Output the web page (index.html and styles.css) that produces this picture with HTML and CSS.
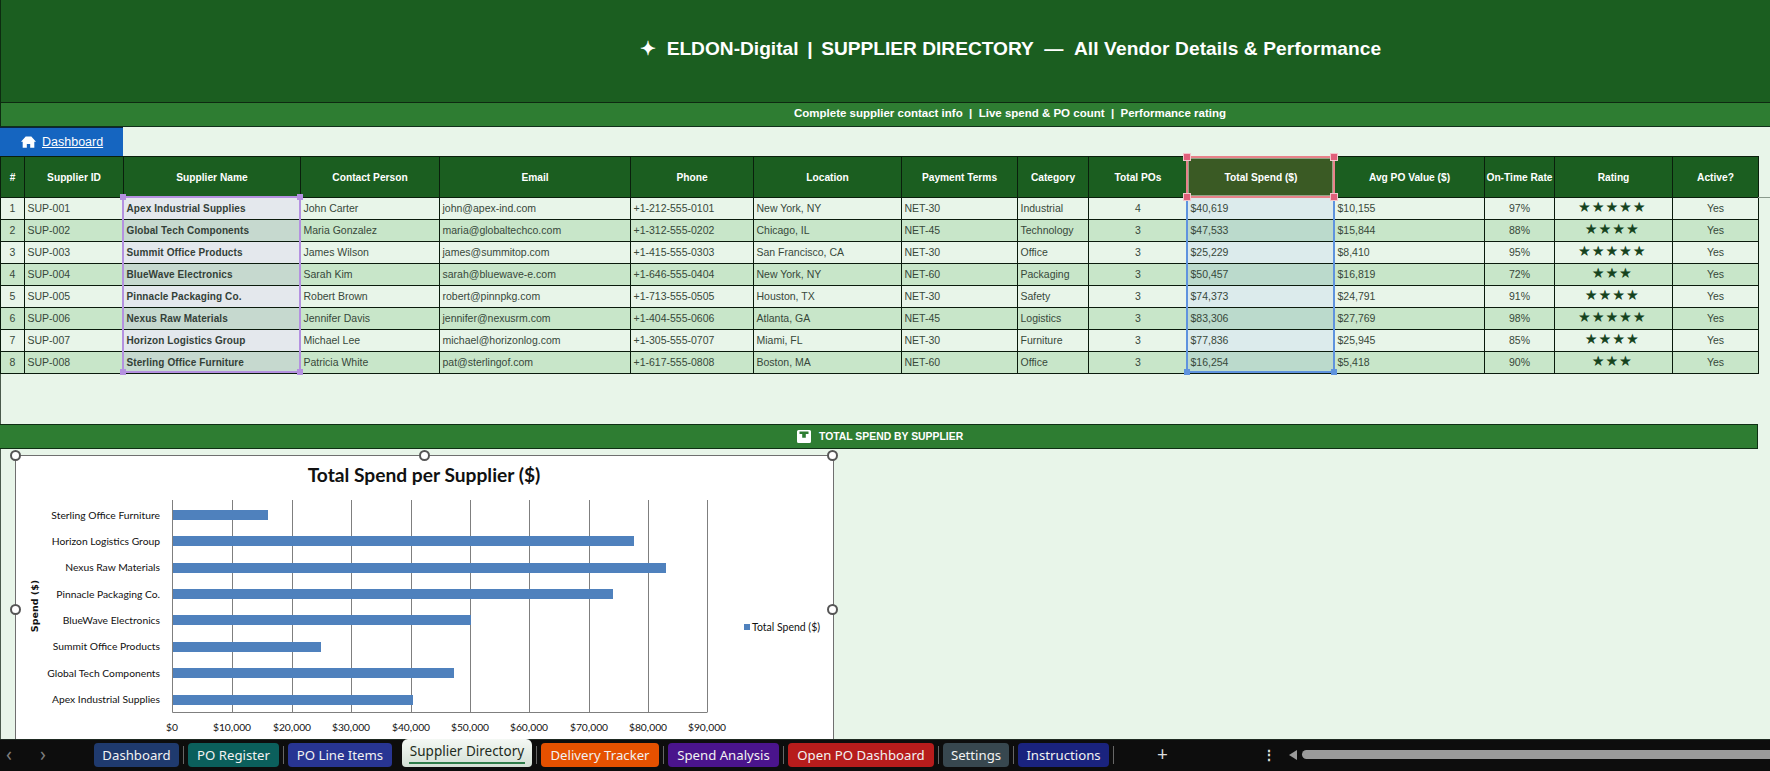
FILE: index.html
```html
<!DOCTYPE html>
<html lang="en">
<head>
<meta charset="utf-8">
<title>Supplier Directory</title>
<link rel="stylesheet" href="styles.css">
</head>
<body>
<div class="window">
  <main class="sheet">
    <header class="title-band"><h1>✦&nbsp; ELDON-Digital <span class="pipe">&nbsp;|&nbsp;</span> SUPPLIER DIRECTORY &nbsp;—&nbsp; <span class="tail">All Vendor Details &amp; Performance</span></h1></header>
    <div class="sub-band">Complete supplier contact info &nbsp;|&nbsp; Live spend &amp; PO count &nbsp;|&nbsp; Performance rating</div>
    <div class="nav-row">
      <a class="dash-link" href="#">
        <svg class="home-icon" viewBox="0 0 16 12" aria-hidden="true"><path d="M5 0h6l5 5.6h-1.8V12H9.8V8.2H6.2V12H1.8V5.6H0z" fill="#fff"/></svg>
        <span>Dashboard</span>
      </a>
    </div>
    <div class="table-wrap">
      <table class="grid">
        <colgroup>
          <col class="c1"><col class="c2"><col class="c3"><col class="c4"><col class="c5"><col class="c6"><col class="c7"><col class="c8"><col class="c9"><col class="c10"><col class="c11"><col class="c12"><col class="c13"><col class="c14"><col class="c15">
        </colgroup>
        <thead>
          <tr><th>#</th><th>Supplier ID</th><th>Supplier Name</th><th>Contact Person</th><th>Email</th><th>Phone</th><th>Location</th><th>Payment Terms</th><th>Category</th><th>Total POs</th><th class="spend-head">Total Spend ($)</th><th>Avg PO Value ($)</th><th>On-Time Rate</th><th>Rating</th><th>Active?</th></tr>
        </thead>
        <tbody>
          <tr><td class="ctr">1</td><td>SUP-001</td><td class="name">Apex Industrial Supplies</td><td>John Carter</td><td>john@apex-ind.com</td><td>+1-212-555-0101</td><td>New York, NY</td><td>NET-30</td><td>Industrial</td><td class="ctr">4</td><td class="spend">$40,619</td><td>$10,155</td><td class="ctr">97%</td><td class="ctr stars">★★★★★</td><td class="ctr">Yes</td></tr>
          <tr><td class="ctr">2</td><td>SUP-002</td><td class="name">Global Tech Components</td><td>Maria Gonzalez</td><td>maria@globaltechco.com</td><td>+1-312-555-0202</td><td>Chicago, IL</td><td>NET-45</td><td>Technology</td><td class="ctr">3</td><td class="spend">$47,533</td><td>$15,844</td><td class="ctr">88%</td><td class="ctr stars">★★★★</td><td class="ctr">Yes</td></tr>
          <tr><td class="ctr">3</td><td>SUP-003</td><td class="name">Summit Office Products</td><td>James Wilson</td><td>james@summitop.com</td><td>+1-415-555-0303</td><td>San Francisco, CA</td><td>NET-30</td><td>Office</td><td class="ctr">3</td><td class="spend">$25,229</td><td>$8,410</td><td class="ctr">95%</td><td class="ctr stars">★★★★★</td><td class="ctr">Yes</td></tr>
          <tr><td class="ctr">4</td><td>SUP-004</td><td class="name">BlueWave Electronics</td><td>Sarah Kim</td><td>sarah@bluewave-e.com</td><td>+1-646-555-0404</td><td>New York, NY</td><td>NET-60</td><td>Packaging</td><td class="ctr">3</td><td class="spend">$50,457</td><td>$16,819</td><td class="ctr">72%</td><td class="ctr stars">★★★</td><td class="ctr">Yes</td></tr>
          <tr><td class="ctr">5</td><td>SUP-005</td><td class="name">Pinnacle Packaging Co.</td><td>Robert Brown</td><td>robert@pinnpkg.com</td><td>+1-713-555-0505</td><td>Houston, TX</td><td>NET-30</td><td>Safety</td><td class="ctr">3</td><td class="spend">$74,373</td><td>$24,791</td><td class="ctr">91%</td><td class="ctr stars">★★★★</td><td class="ctr">Yes</td></tr>
          <tr><td class="ctr">6</td><td>SUP-006</td><td class="name">Nexus Raw Materials</td><td>Jennifer Davis</td><td>jennifer@nexusrm.com</td><td>+1-404-555-0606</td><td>Atlanta, GA</td><td>NET-45</td><td>Logistics</td><td class="ctr">3</td><td class="spend">$83,306</td><td>$27,769</td><td class="ctr">98%</td><td class="ctr stars">★★★★★</td><td class="ctr">Yes</td></tr>
          <tr><td class="ctr">7</td><td>SUP-007</td><td class="name">Horizon Logistics Group</td><td>Michael Lee</td><td>michael@horizonlog.com</td><td>+1-305-555-0707</td><td>Miami, FL</td><td>NET-30</td><td>Furniture</td><td class="ctr">3</td><td class="spend">$77,836</td><td>$25,945</td><td class="ctr">85%</td><td class="ctr stars">★★★★</td><td class="ctr">Yes</td></tr>
          <tr><td class="ctr">8</td><td>SUP-008</td><td class="name">Sterling Office Furniture</td><td>Patricia White</td><td>pat@sterlingof.com</td><td>+1-617-555-0808</td><td>Boston, MA</td><td>NET-60</td><td>Office</td><td class="ctr">3</td><td class="spend">$16,254</td><td>$5,418</td><td class="ctr">90%</td><td class="ctr stars">★★★</td><td class="ctr">Yes</td></tr>
        </tbody>
      </table>
      <div class="range range-name"><i class="h tl"></i><i class="h tr"></i><i class="h bl"></i><i class="h br"></i></div>
      <div class="range range-spend"><i class="h bl"></i><i class="h br"></i></div>
      <div class="range range-head"><i class="h tl"></i><i class="h tr"></i><i class="h bl"></i><i class="h br"></i></div>
      <div class="row-stub"></div>
    </div>
    <div class="section-bar">
      <svg class="sec-icon" viewBox="0 0 14 13" aria-hidden="true"><path d="M1.500 0h11A1.500 1.500 0 0 1 14 1.500v10a1.500 1.500 0 0 1-1.500 1.500h-11A1.500 1.500 0 0 1 0 11.500v-10A1.500 1.500 0 0 1 1.500 0z" fill="#fff"/><path d="M2.500 1.500h9v2.500H8.800v3.800H5.200V4H2.500z" fill="#2e7d32"/></svg>
      <span>TOTAL SPEND BY SUPPLIER</span>
    </div>
    <figure class="chart">
      <svg class="chart-svg" viewBox="1 1 817 284" width="817" height="284">
        <text x="409" y="27" class="ct">Total Spend per Supplier ($)</text>
        <g class="gl">
          <path d="M157.500 45v212M217.500 45v212M277.500 45v212M336.500 45v212M396.500 45v212M455.500 45v212M514.500 45v212M574.500 45v212M633.500 45v212M692.500 45v212"/>
        </g>
        <path class="axis" d="M157.500 45v212.500H692.500"/>
        <g class="bars">
          <rect x="158" y="55" width="95" height="10"/>
          <rect x="158" y="81" width="461" height="10"/>
          <rect x="158" y="108" width="493" height="10"/>
          <rect x="158" y="134" width="440" height="10"/>
          <rect x="158" y="160" width="298" height="10"/>
          <rect x="158" y="187" width="148" height="10"/>
          <rect x="158" y="213" width="281" height="10"/>
          <rect x="158" y="240" width="240" height="10"/>
        </g>
        <g class="yl">
          <text x="145" y="64">Sterling Office Furniture</text>
          <text x="145" y="90">Horizon Logistics Group</text>
          <text x="145" y="116">Nexus Raw Materials</text>
          <text x="145" y="143">Pinnacle Packaging Co.</text>
          <text x="145" y="169">BlueWave Electronics</text>
          <text x="145" y="195">Summit Office Products</text>
          <text x="145" y="222">Global Tech Components</text>
          <text x="145" y="248">Apex Industrial Supplies</text>
        </g>
        <g class="xl">
          <text x="157" y="276">$0</text><text x="217" y="276">$10,000</text><text x="277" y="276">$20,000</text><text x="336" y="276">$30,000</text><text x="396" y="276">$40,000</text><text x="455" y="276">$50,000</text><text x="514" y="276">$60,000</text><text x="574" y="276">$70,000</text><text x="633" y="276">$80,000</text><text x="692" y="276">$90,000</text>
        </g>
        <text class="yt" transform="translate(23 151) rotate(-90)">Spend ($)</text>
        <rect class="lg" x="729" y="169" width="6" height="6"/>
        <text class="lt" x="737" y="176">Total Spend ($)</text>
      </svg>
      <i class="cd ctl"></i><i class="cd ctc"></i><i class="cd ctr-h"></i><i class="cd cml"></i><i class="cd cmr"></i>
    </figure>
  </main>
  <footer class="tabbar">
    <div class="tab-nav"><span>‹</span><span>›</span></div>
    <div class="tabs">
      <a class="tab t-dash">Dashboard</a><i class="sep"></i>
      <a class="tab t-reg">PO Register</a><i class="sep"></i>
      <a class="tab t-line">PO Line Items</a>
      <a class="tab active">Supplier Directory</a><i class="sep"></i>
      <a class="tab t-del">Delivery Tracker</a><i class="sep"></i>
      <a class="tab t-spend">Spend Analysis</a><i class="sep"></i>
      <a class="tab t-open">Open PO Dashboard</a><i class="sep"></i>
      <a class="tab t-set">Settings</a><i class="sep"></i>
      <a class="tab t-ins">Instructions</a><i class="sep"></i>
    </div>
    <span class="plus">+</span>
    <span class="kebab">⋮</span>
    <div class="scroll"><i class="arrow"></i><div class="thumb"></div></div>
  </footer>
</div>
</body>
</html>
```

FILE: styles.css
```css
* { box-sizing: border-box; }
html, body { margin: 0; height: 100%; overflow: hidden; }
body { font-family: "Liberation Sans", Arial, sans-serif; background: #e8f5e9; }
.window { width: 1770px; height: 771px; display: flex; flex-direction: column; }
.sheet { flex: 1; min-height: 0; overflow: hidden; background: linear-gradient(#4a5a4c, #4a5a4c) left top / 1px 100% no-repeat, #e8f5e9; }

.title-band { height: 103px; background: #1b5e20; border-left: 1px solid #0d2c10; border-bottom: 1px solid #0e2a11; padding: 37px 0 0 639px; }
.title-band h1 { margin: 0; color: #fff; font-size: 19.15px; line-height: 24px; font-weight: 700; white-space: nowrap; }
.pipe { margin: 0 -2px; }
.tail { letter-spacing: .1px; }
.sub-band { height: 24px; background: #2e7d32; border-left: 1px solid #0d2c10; border-bottom: 1px solid #10301a; color: #fff; font-size: 11.5px; font-weight: 700; line-height: 21px; padding-left: 793px; white-space: nowrap; }
.nav-row { height: 29px; }
.dash-link { display: flex; align-items: center; gap: 6px; width: 123px; height: 29px; background: #1565c0; color: #fff; font-size: 12.5px; padding: 0 0 1px 21px; text-decoration: underline; border-top: 1px solid #0b2340; }
.home-icon { width: 15px; height: 12px; }

.table-wrap { position: relative; height: 268px; }
.grid { border-collapse: collapse; table-layout: fixed; width: 1758px; }
.c1 { width: 24px; } .c2 { width: 99px; } .c3 { width: 177px; } .c4 { width: 139px; } .c5 { width: 191px; }
.c6 { width: 123px; } .c7 { width: 148px; } .c8 { width: 116px; } .c9 { width: 71px; } .c10 { width: 99px; }
.c11 { width: 147px; } .c12 { width: 150px; } .c13 { width: 70px; } .c14 { width: 118px; } .c15 { width: 86px; }
.grid th { height: 41px; background: #1b5e20; color: #fff; font-size: 10.2px; font-weight: 700; border: 1px solid #0a1f0c; padding: 0; text-align: center; white-space: nowrap; }
.grid td { height: 22px; padding: 0 0 1px 2.5px; font-size: 10.5px; color: #37483a; border: 1px solid #0a1a0c; white-space: nowrap; overflow: hidden; background: #e8f5e9; }
.grid tbody tr:nth-child(even) td { background: #c8e6c9; }
.grid td.ctr { text-align: center; padding-left: 0; }
.grid td.name { font-weight: 700; font-size: 10px; color: #333f38; background: #e4e8ed; padding-left: 2.5px; letter-spacing: .1px; }
.grid tbody tr:nth-child(even) td.name { background: #c6d9cf; }
.grid td.spend { background: #dcebec; }
.grid tbody tr:nth-child(even) td.spend { background: #bbdacc; }
.grid th.spend-head { background: #3a5a24; }
.grid td.stars { font-size: 11.5px; color: #14421c; letter-spacing: 3.4px; line-height: 1; font-family: "DejaVu Sans", sans-serif; -webkit-text-stroke: .7px #14421c; }

.range { position: absolute; }
.range-name { left: 122px; top: 40px; width: 179px; height: 177px; border: 2px solid #b491e0; }
.range-spend { left: 1186px; top: 41px; width: 149px; height: 176px; border: 2px solid #5f93de; border-top: 0; }
.range-head { left: 1186px; top: 0; width: 149px; height: 42px; border: 2px solid #e8828a; box-shadow: inset 0 0 0 1px rgba(255,255,255,.45); }
.h { position: absolute; width: 6px; height: 6px; background: #b491e0; border: 0; }
.range-spend .h { background: #5f93de; }
.range-head .h { background: #e0607a; box-shadow: 0 0 0 1px #f4c6cc; }
.tl { left: -4px; top: -4px; } .tr { right: -4px; top: -4px; }
.bl { left: -4px; bottom: -4px; } .br { right: -4px; bottom: -4px; }
.row-stub { position: absolute; left: 1758px; top: 41px; width: 12px; height: 1px; background: #8a9a8c; }

.section-bar { height: 25px; width: 1758px; background: #2e7d32; border: 1px solid #0f2f14; border-left: 0; display: flex; align-items: center; gap: 8px; padding-left: 797px; color: #fff; font-size: 10.4px; font-weight: 700; }
.sec-icon { width: 14px; height: 13px; }

.chart { position: relative; margin: 6px 0 0 15px; width: 819px; height: 290px; background: #fff; border: 1px solid #6f6f6f; border-bottom: 0; }
.chart-svg { display: block; }
.ct { font: 700 19.2px "Lato", "Open Sans", sans-serif; text-anchor: middle; fill: #111; }
.gl path { stroke: #7f7f7f; stroke-width: 1; fill: none; }
.axis { stroke: #7f7f7f; fill: none; }
.bars rect, .lg { fill: #4f81bd; }
.yl text { font: 10.3px "Lato", sans-serif; text-anchor: end; fill: #111; }
.xl text { font: 10.3px "Lato", sans-serif; text-anchor: middle; fill: #111; }
.yt { font: 700 9.5px "DejaVu Sans", sans-serif; text-anchor: middle; fill: #111; }
.lt { font: 10.5px "Lato", sans-serif; fill: #111; }
.cd { position: absolute; width: 11px; height: 11px; border-radius: 50%; background: #fff; border: 2px solid #555; }
.ctl { left: -6px; top: -6px; } .ctc { left: 403px; top: -6px; } .ctr-h { left: 811px; top: -6px; }
.cml { left: -6px; top: 148px; } .cmr { left: 811px; top: 148px; }

.tabbar { height: 32px; flex: none; background: #0d0d0d; display: flex; align-items: flex-start; position: relative; border-top: 1px solid #1f2a22; color: #eee; font-family: "Noto Sans", "Open Sans", sans-serif; }
.tab-nav { width: 94px; display: flex; gap: 28px; padding: 4px 0 0 6px; font-size: 19px; line-height: 20px; color: #7d7d7d; }
.tabs { display: flex; align-items: flex-start; padding-top: 3px; }
.tab { height: 24px; border-radius: 4px; color: #f2f2f2; font-size: 13.2px; line-height: 24px; text-align: center; white-space: nowrap; }
.sep { width: 1px; height: 18px; margin: 3px 4px 0; background: #666; }
.t-dash { width: 85px; background: #1f3a6e; }
.t-reg { width: 91px; background: #0b5f5c; }
.t-line { width: 104px; background: #283593; margin-right: 10px; }
.active { width: 130px; height: 28px; margin-top: -4px; font-size: 13.5px; line-height: 25px; background: linear-gradient(#f4f8f4, #d3e0d5); color: #1d2b20; border-radius: 6px 6px 4px 4px; position: relative; }
.active::after { content: ""; position: absolute; left: 7px; right: 7px; bottom: 3px; height: 2px; background: #2e7d4a; }
.t-del { width: 118px; background: #e65100; }
.t-spend { width: 111px; background: #4a148c; }
.t-open { width: 146px; background: #b71c1c; }
.t-set { width: 66px; background: #37474f; }
.t-ins { width: 91px; background: #1a237e; }
.plus { position: absolute; left: 1157px; top: 3px; font-size: 19px; line-height: 22px; color: #ddd; }
.kebab { position: absolute; left: 1262px; top: 4px; font-size: 14px; line-height: 22px; color: #ddd; font-weight: 700; }
.scroll { position: absolute; left: 1289px; top: 10px; right: 0; height: 9px; display: flex; align-items: center; gap: 5px; }
.arrow { width: 0; height: 0; border: 5px solid transparent; border-left: 0; border-right: 8px solid #9a9a9a; }
.thumb { flex: 1; height: 9px; background: #9a9a9a; border-radius: 5px 0 0 5px; }
```
